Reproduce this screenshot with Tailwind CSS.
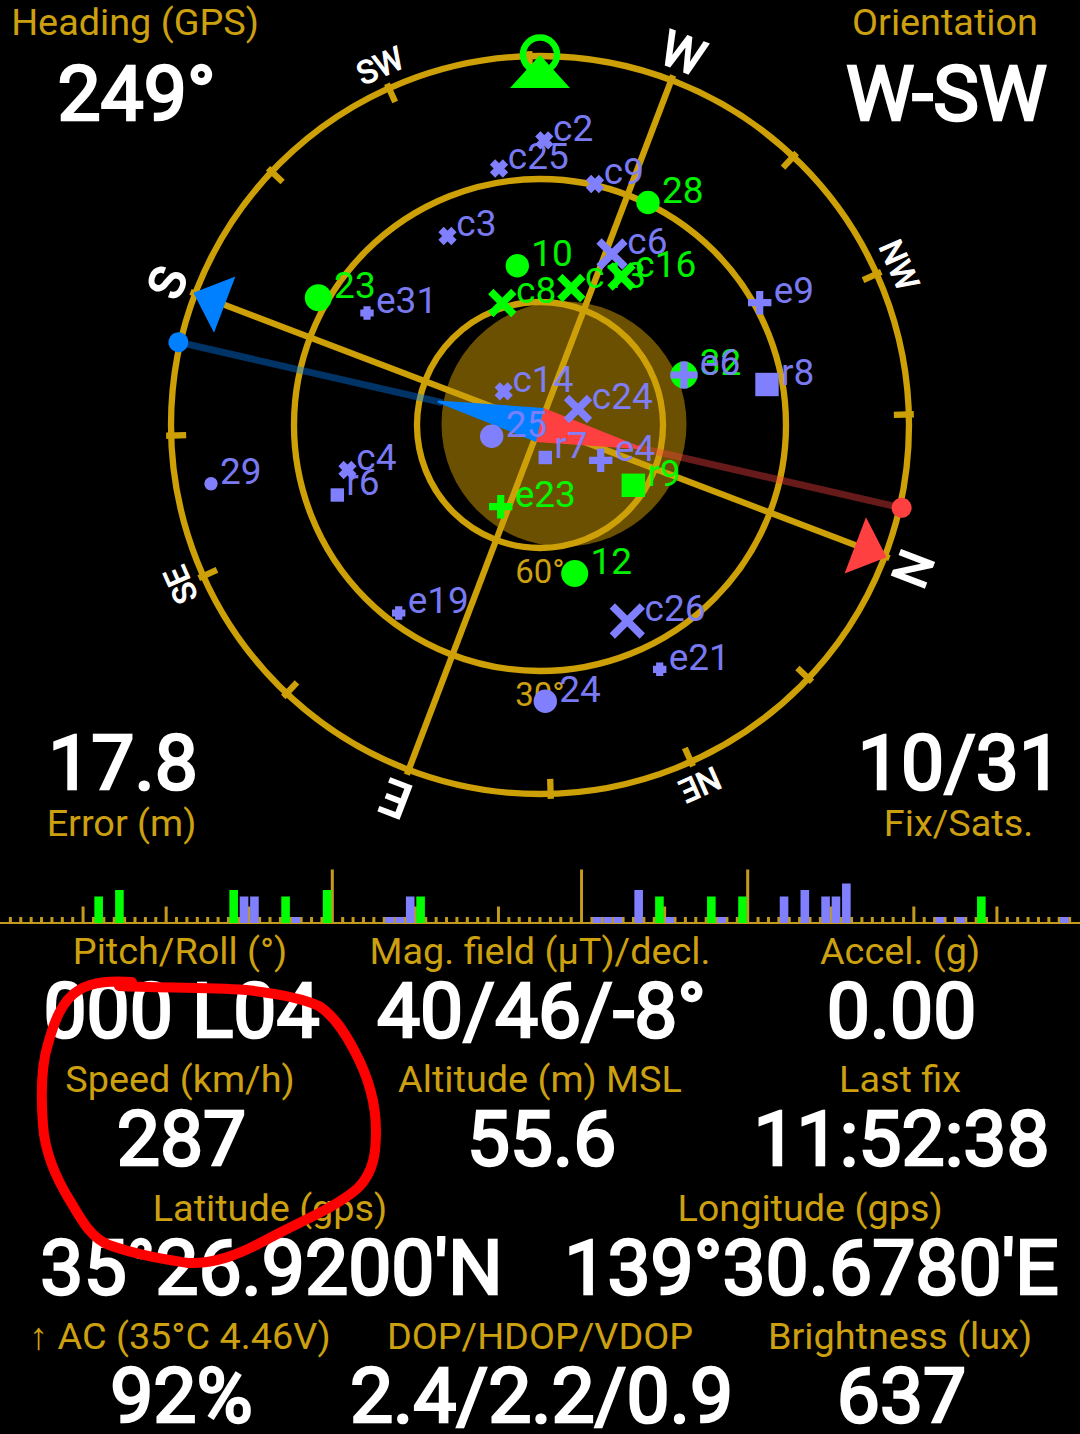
<!DOCTYPE html>
<html lang="en">
    <head>
        <title>GPS Status</title>
        <meta charset="UTF-8">
        <meta name="viewport" content="width=device-width, initial-scale=1">
        <script src="https://cdn.jsdelivr.net/npm/@tailwindcss/browser@4"></script>
    </head>
    <body class="bg-black">
        <main class="relative flex flex-col w-[1080px] h-[1434px] overflow-hidden bg-black text-[#cda010] font-['Roboto','Noto_Sans',sans-serif] text-[37.8px] leading-[45px] text-center whitespace-nowrap">
            <!-- sky view with the four corner readings -->
            <section class="relative flex flex-col justify-between h-[868px] shrink-0 pb-[22px]">
                <svg id="sky" class="absolute inset-0" width="1080" height="868" viewBox="0 0 1080 868" fill="none">
                    <circle cx="564" cy="424" r="122.5" fill="#6a5000"/>
                    <g id="ticks" stroke="#cda008" stroke-width="6.300">
                        <circle cx="540" cy="425" r="369"/>
                        <circle cx="540" cy="425" r="246"/>
                        <circle cx="540" cy="425" r="123"/>
                    </g>
                    <g fill="#cda010" font-size="33" text-anchor="middle">
                        <text x="540" y="583">60°</text>
                        <text x="540" y="705.5">30°</text>
                    </g>
                    <g fill="#fff" stroke="#fff" stroke-width="2" font-size="48.500" text-anchor="middle">
                        <text x="540.5" y="42.500" transform="rotate(111 540 425)">N</text>
                        <text x="540.5" y="41.500" transform="rotate(201 540 425)">E</text>
                        <text x="539.5" y="43" transform="rotate(291 540 425)">S</text>
                        <text x="540" y="43.500" transform="rotate(21 540 425)">W</text>
                    </g>
                    <g fill="#fff" stroke="#fff" stroke-width="1.2" font-size="32" text-anchor="middle">
                        <text x="540" y="42.500" transform="rotate(156 540 425)">NE</text>
                        <text x="540" y="43" transform="rotate(246 540 425)">SE</text>
                        <text x="540" y="43" transform="rotate(336 540 425)">SW</text>
                        <text x="540" y="43" transform="rotate(66 540 425)">NW</text>
                    </g>
                    <path d="M540 54l30 33.500h-60z" fill="#ff4040" transform="rotate(110.9 540 425)"/>
                    <path d="M540 54l30 33.500h-60z" fill="#0080ff" transform="rotate(290.9 540 425)"/>
                    <path d="M540 55l30 33h-60z" fill="#0f0"/>
                    <circle cx="540" cy="54.500" r="17" stroke="#0f0" stroke-width="6.500"/>
                    <!-- magnetic needle -->
                    <g transform="rotate(102.9 540 425)">
                        <path d="M540 325V54" stroke="#ff4040" stroke-opacity=".4" stroke-width="7"/>
                        <path d="M540 525v271" stroke="#0080ff" stroke-opacity=".4" stroke-width="7"/>
                        <path d="M522.500 425L539 321h2L557.500 425z" fill="#ff4040"/>
                        <path d="M522.500 425L539 530h2L557.500 425z" fill="#0080ff"/>
                        <circle cx="540" cy="54" r="10" fill="#ff4040"/>
                        <circle cx="540" cy="796" r="10" fill="#0080ff"/>
                    </g>
                    <g id="sats" font-size="37"></g>
                </svg>
                <div class="flex justify-between">
                    <div class="w-[270px]">
                        <div>Heading (GPS)</div>
                        <div class="-mt-px pl-[3px] text-white text-[76.8px] leading-[101px] [-webkit-text-stroke:2.6px_white]">249°</div>
                    </div>
                    <div class="w-[270px]">
                        <div>Orientation</div>
                        <div class="-mt-px pl-[3px] text-white text-[76.8px] leading-[101px] [-webkit-text-stroke:2.6px_white]">W-SW</div>
                    </div>
                </div>
                <div class="flex justify-between">
                    <div class="w-[243px]">
                        <div class="-mt-px mb-px pl-[3px] text-white text-[76.8px] leading-[74px] [-webkit-text-stroke:2.6px_white]">17.8</div>
                        <div>Error (m)</div>
                    </div>
                    <div class="w-[243px]">
                        <div class="-mt-px mb-px pl-[3px] text-white text-[76.8px] leading-[74px] [-webkit-text-stroke:2.6px_white]">10/31</div>
                        <div>Fix/Sats.</div>
                    </div>
                </div>
            </section>

            <!-- signal strength -->
            <svg id="bars" class="shrink-0" width="1080" height="60" viewBox="0 868 1080 60"></svg>

            <section class="grid grid-cols-6 gap-y-[8.5px] pt-[0.5px]">
                <div class="col-span-2">
                    <div>Pitch/Roll (°)</div>
                    <div class="pl-[3px] text-white text-[76.8px] leading-[75px] [-webkit-text-stroke:2.6px_white]">000 L04</div>
                </div>
                <div class="col-span-2">
                    <div>Mag. field (µT)/decl.</div>
                    <div class="pl-[3px] text-white text-[76.8px] leading-[75px] [-webkit-text-stroke:2.6px_white]">40/46/-8°</div>
                </div>
                <div class="col-span-2">
                    <div>Accel. (g)</div>
                    <div class="pl-[3px] text-white text-[76.8px] leading-[75px] [-webkit-text-stroke:2.6px_white]">0.00</div>
                </div>
                <div class="col-span-2">
                    <div>Speed (km/h)</div>
                    <div class="pl-[3px] text-white text-[76.8px] leading-[75px] [-webkit-text-stroke:2.6px_white]">287</div>
                </div>
                <div class="col-span-2">
                    <div>Altitude (m) MSL</div>
                    <div class="pl-[3px] text-white text-[76.8px] leading-[75px] [-webkit-text-stroke:2.6px_white]">55.6</div>
                </div>
                <div class="col-span-2">
                    <div>Last fix</div>
                    <div class="pl-[3px] text-white text-[76.8px] leading-[75px] [-webkit-text-stroke:2.6px_white]">11:52:38</div>
                </div>
                <div class="col-span-3">
                    <div>Latitude (gps)</div>
                    <div class="pl-[3px] text-white text-[76.8px] leading-[75px] [-webkit-text-stroke:2.6px_white]">35°26.9200'N</div>
                </div>
                <div class="col-span-3">
                    <div>Longitude (gps)</div>
                    <div class="pl-[3px] text-white text-[76.8px] leading-[75px] [-webkit-text-stroke:2.6px_white]">139°30.6780'E</div>
                </div>
                <div class="col-span-2">
                    <div>↑ AC (35°C 4.46V)</div>
                    <div class="pl-[3px] text-white text-[76.8px] leading-[75px] [-webkit-text-stroke:2.6px_white]">92%</div>
                </div>
                <div class="col-span-2">
                    <div>DOP/HDOP/VDOP</div>
                    <div class="-mx-5 pl-[3px] text-white text-[76.8px] leading-[75px] [-webkit-text-stroke:2.6px_white]">2.4/2.2/0.9</div>
                </div>
                <div class="col-span-2">
                    <div>Brightness (lux)</div>
                    <div class="pl-[3px] text-white text-[76.8px] leading-[75px] [-webkit-text-stroke:2.6px_white]">637</div>
                </div>
            </section>

            <!-- hand drawn marker round the speed -->
            <svg class="absolute left-0 top-[960px]" width="400" height="320" viewBox="0 960 400 320" fill="none">
                <path d="M132 982C112 981 94 981 79 990C62 1000 54 1022 48 1044C41 1066 41 1098 43 1125C45 1156 58 1182 72 1204C83 1223 92 1238 109 1245C137 1255 164 1259 188 1263C214 1264 238 1255 264 1241C296 1223 334 1209 358 1188C374 1172 376 1152 376 1131C376 1100 367 1074 354 1050C344 1031 334 1016 319 1006C302 998 274 993 246 990C205 987 160 988 119 986" stroke="red" stroke-width="10" stroke-linecap="round" stroke-linejoin="round"/>
            </svg>
        </main>
        <script>
            var GREEN = '#00ff00'
            var BLUE = '#8080ff'

            // spokes and ticks, every 22.5 degrees for heading 249
            var ticks = ''
            for (var i = 0; i < 16; i++) {
                var to = i % 4 == 0 ? 425 : 71
                ticks += `<path d="M540 51V${to}" transform="rotate(${110.85 + i * 22.5} 540 425)"/>`
            }
            document.getElementById('ticks').innerHTML += ticks

            // label, x, y, half size, used in fix
            var sats = [
                ['10', 517.3, 265.7, 11.7, 1],
                ['12', 574.7, 573.5, 13.5, 1],
                ['23', 318.3, 297.7, 13.5, 1],
                ['24', 545.3, 701.3, 11.7, 0],
                ['25', 491.7, 436.3, 11.7, 0],
                ['28', 648, 202.5, 11.7, 1],
                ['29', 211, 483.7, 6.7, 0],
                ['32', 684, 375, 13.5, 1],
                ['r6', 337.3, 495, 6.7, 0],
                ['r7', 545.3, 457.5, 6.7, 0],
                ['r8', 767, 384.5, 11.7, 0],
                ['r9', 633.3, 485.3, 11.7, 1],
                ['c2', 544.3, 140.3, 6.5, 0],
                ['c3', 447.5, 236, 6.5, 0],
                ['c4', 347.5, 470, 6.5, 0],
                ['c6', 612, 254, 13, 0],
                ['c8', 502.3, 303, 11.5, 1],
                ['c9', 595, 184, 6.5, 0],
                ['c13', 571.3, 288, 11.5, 1],
                ['c14', 503.7, 391.3, 6.5, 0],
                ['c16', 621.5, 276.5, 11.5, 1],
                ['c24', 578, 409, 11.5, 0],
                ['c25', 499, 168.5, 6.5, 0],
                ['c26', 627.3, 621, 15, 0],
                ['e4', 600.7, 460.3, 11.7, 0],
                ['e6', 684, 375, 13.5, 0],
                ['e9', 759.7, 302.7, 11.7, 0],
                ['e19', 398.7, 613, 6.7, 0],
                ['e21', 659.7, 669.3, 6.7, 0],
                ['e23', 500.7, 506.7, 11.7, 1],
                ['e31', 367, 313, 6.7, 0],
            ]
            var out = ''
            sats.forEach(([label, x, y, s, fix]) => {
                var color = fix ? GREEN : BLUE
                out += `<text x="${x + s + 2.3}" y="${y + 0.2}" fill="${color}" opacity=".95">${label}</text>`
                if (label[0] == 'c') {
                    out += `<path d="M${x - s} ${y - s}l${s * 2} ${s * 2}m0 ${-s * 2}l${-s * 2} ${s * 2}" stroke="${color}" stroke-width="7.5"/>`
                } else if (label[0] == 'e') {
                    out += `<path d="M${x - s} ${y}h${s * 2}M${x} ${y - s}v${s * 2}" stroke="${color}" stroke-width="7.2"/>`
                } else if (label[0] == 'r') {
                    out += `<rect x="${x - s}" y="${y - s}" width="${s * 2}" height="${s * 2}" fill="${color}"/>`
                } else {
                    out += `<circle cx="${x}" cy="${y}" r="${s}" fill="${color}"/>`
                }
            })
            document.getElementById('sats').innerHTML = out

            // 104 slots over the full width
            var step = 1080 / 104
            var bars = '<rect x="0" y="922" width="1080" height="2" fill="#c49a1e"/>'
            for (var i = 1; i < 104; i++) {
                var y = [32, 56, 72].includes(i) ? 869.5 : i % 8 == 0 ? 906.5 : 917
                bars += `<rect x="${i * step - 1.5}" y="${y}" width="3" height="${924 - y}" fill="#c49a1e"/>`
            }
            // slot, top, used in fix
            var levels = [
                [9, 896.5, 1], [11, 890, 1], [22, 890, 1], [23, 896.5, 0], [24, 896.5, 0],
                [27, 896.5, 1], [28, 917, 0], [31, 890, 1], [37, 917, 0], [38, 917, 0],
                [39, 896.5, 0], [40, 896.5, 1], [57, 917, 0], [58, 917, 0], [59, 917, 0],
                [61, 890, 0], [63, 896.5, 1], [64, 917, 0], [68, 896.5, 1], [69, 917, 0],
                [71, 896.5, 1], [75, 896.5, 0], [77, 890, 0], [79, 896.5, 0], [80, 896.5, 0],
                [81, 883.5, 0], [90, 917, 0], [92, 917, 0], [94, 896.5, 1], [102, 917, 0],
            ]
            levels.forEach(([slot, y, fix]) => {
                bars += `<rect x="${slot * step + 0.9}" y="${y}" width="8.6" height="${923 - y}" fill="${fix ? GREEN : BLUE}"/>`
            })
            document.getElementById('bars').innerHTML = bars
        </script>
    </body>
</html>
